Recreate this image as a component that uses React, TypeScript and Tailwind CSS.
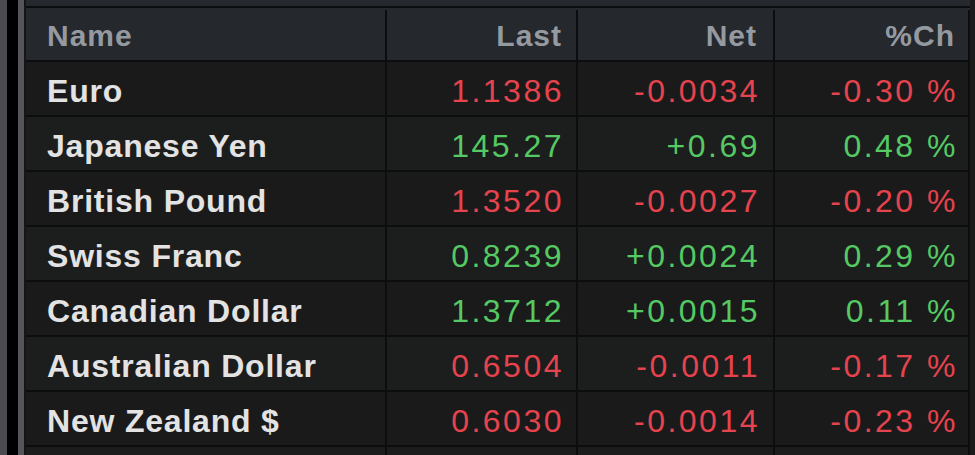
const rows = [
  { name: "Euro", last: "1.1386", net: "-0.0034", pct: "-0.30 %", up: false },
  { name: "Japanese Yen", last: "145.27", net: "+0.69", pct: "0.48 %", up: true },
  { name: "British Pound", last: "1.3520", net: "-0.0027", pct: "-0.20 %", up: false },
  { name: "Swiss Franc", last: "0.8239", net: "+0.0024", pct: "0.29 %", up: true },
  { name: "Canadian Dollar", last: "1.3712", net: "+0.0015", pct: "0.11 %", up: true },
  { name: "Australian Dollar", last: "0.6504", net: "-0.0011", pct: "-0.17 %", up: false },
  { name: "New Zealand $", last: "0.6030", net: "-0.0014", pct: "-0.23 %", up: false },
];

const cols = "grid grid-cols-[361px_191px_197px_195px]";

export default function App() {
  return (
    <div className="flex h-[455px] w-[975px] overflow-hidden bg-[#1a1a1a] font-[family-name:'Liberation_Sans',Arial,sans-serif]">
      <div className="w-[7px] bg-[#4a4a50]" />
      <div className="w-[11px] bg-black" />
      <div className="w-[6px] bg-[#55555b]" />
      <div className="w-[2px] bg-[#151515]" />
      <div className="flex flex-col">
        <div className="h-[6px] bg-[#25282d]" />
        <div className={`${cols} h-[56px] border-y-2 border-[#0c0d0f] bg-[#25282d] pt-[2px] text-[30px] font-bold text-[#959aa0]`}>
          <div className="flex items-center border-r-2 border-[#0c0d0f] pl-[21px] tracking-[1px]">Name</div>
          <div className="flex items-center justify-end border-r-2 border-[#0c0d0f] pr-[14px] tracking-[1px]">Last</div>
          <div className="flex items-center justify-end border-r-2 border-[#0c0d0f] pr-[16px] tracking-[1px]">Net</div>
          <div className="flex items-center justify-end border-r-2 border-[#0c0d0f] pr-[13px] tracking-[1px]">%Ch</div>
        </div>
        {rows.map((r, i) => {
          const tone = r.up ? "text-[#55c963]" : "text-[#e5434d]";
          return (
            <div
              key={r.name}
              className={`${cols} h-[55px] border-b-2 border-[#0c0d0f] ${i % 2 ? "bg-[#1c1d1d]" : "bg-[#1a1a1a]"}`}
            >
              <div className="flex items-center border-r-2 border-[#0c0d0f] pl-[21px] pt-[5px] text-[32px] font-bold tracking-[0.8px] text-[#e3e3e3]">
                {r.name}
              </div>
              <div className={`flex items-center justify-end border-r-2 border-[#0c0d0f] pr-[12px] pt-[5px] text-[32px] tracking-[2.5px] ${tone}`}>
                {r.last}
              </div>
              <div className={`flex items-center justify-end border-r-2 border-[#0c0d0f] pr-[13px] pt-[5px] text-[32px] tracking-[2.5px] ${tone}`}>
                {r.net}
              </div>
              <div className={`flex items-center justify-end border-r-2 border-[#0c0d0f] pr-[10px] pt-[5px] text-[32px] tracking-[2.5px] ${tone}`}>
                {r.pct}
              </div>
            </div>
          );
        })}
        <div className={`${cols} flex-1 bg-[#1c1c1c]`}>
          <div className="border-r-2 border-[#0c0d0f]" />
          <div className="border-r-2 border-[#0c0d0f]" />
          <div className="border-r-2 border-[#0c0d0f]" />
          <div className="border-r-2 border-[#0c0d0f]" />
        </div>
      </div>
    </div>
  );
}
